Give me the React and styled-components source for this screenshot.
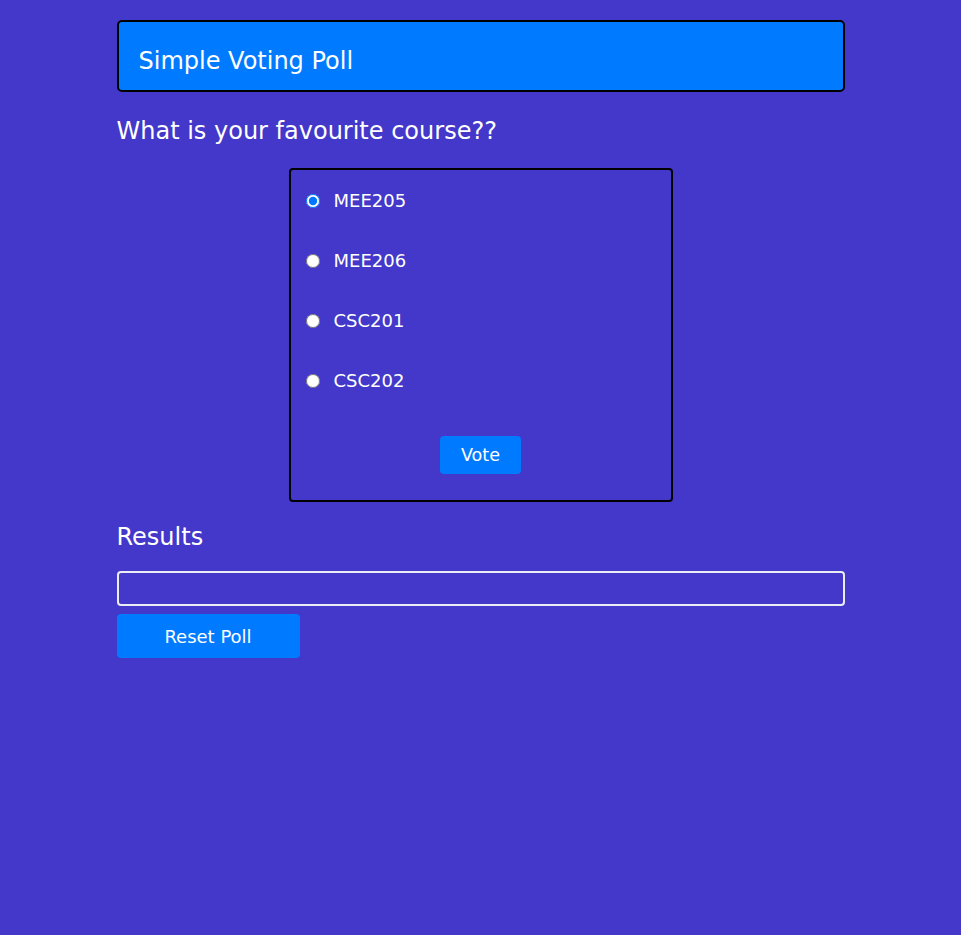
import React from "react";
import styled, { createGlobalStyle } from "styled-components";

const Global = createGlobalStyle`
  html, body {
    margin: 0;
    padding: 0;
    background: #4338ca;
    min-height: 100%;
  }
  body {
    font-family: "DejaVu Sans", "Liberation Sans", sans-serif;
    color: #ffffff;
  }
`;

const Page = styled.div`
  width: 728px;
  margin: 0 auto;
  padding-top: 20px;
`;

const Header = styled.h1`
  margin: 0;
  background: #007bff;
  border: 2px solid #000;
  border-radius: 5px;
  padding: 25px 20px 15px;
  font-size: 24px;
  line-height: 28px;
  font-weight: normal;
`;

const Heading = styled.h2`
  margin: ${(p) => p.$margin};
  font-size: 24px;
  line-height: 28px;
  font-weight: normal;
`;

const PollForm = styled.form`
  width: 384px;
  box-sizing: border-box;
  margin: 0 auto;
  border: 2px solid #000;
  border-radius: 4px;
  padding: 20px 16px 26px;
  display: flex;
  flex-direction: column;
`;

const Options = styled.div`
  display: flex;
  flex-direction: column;
  gap: 38px;
`;

const Option = styled.label`
  display: flex;
  align-items: center;
  height: 22px;
  gap: 14px;
  font-size: 18px;
  line-height: 20px;
  cursor: pointer;
`;

const Radio = styled.input`
  margin: 0 0 0 -1px;
  width: 14px;
  height: 14px;
`;

const Button = styled.button`
  font-family: "DejaVu Sans", "Liberation Sans", sans-serif;
  font-size: ${(p) => p.$fs || 18}px;
  color: #fff;
  background: #007bff;
  border: none;
  border-radius: 4px;
  cursor: pointer;
  padding: 0;
  width: ${(p) => p.$w}px;
  height: ${(p) => p.$h}px;
`;

const VoteRow = styled.div`
  display: flex;
  justify-content: center;
  margin-top: 44px;
`;

const ResultsBox = styled.div`
  height: 35px;
  box-sizing: border-box;
  border: 2px solid #ececf4;
  border-radius: 4px;
  margin-bottom: 8px;
`;

const courses = ["MEE205", "MEE206", "CSC201", "CSC202"];

export default function App() {
  return (
    <>
      <Global />
      <Page>
        <Header>Simple Voting Poll</Header>
        <Heading $margin="25px 0 23px">What is your favourite course??</Heading>
        <PollForm onSubmit={(e) => e.preventDefault()}>
          <Options>
            {courses.map((c, i) => (
              <Option key={c}>
                <Radio type="radio" name="course" value={c} defaultChecked={i === 0} />
                {c}
              </Option>
            ))}
          </Options>
          <VoteRow>
            <Button type="submit" $w={81} $h={38} $fs={17.6}>Vote</Button>
          </VoteRow>
        </PollForm>
        <Heading $margin="21px 0 20px">Results</Heading>
        <ResultsBox />
        <Button type="button" $w={183} $h={44}>Reset Poll</Button>
      </Page>
    </>
  );
}
